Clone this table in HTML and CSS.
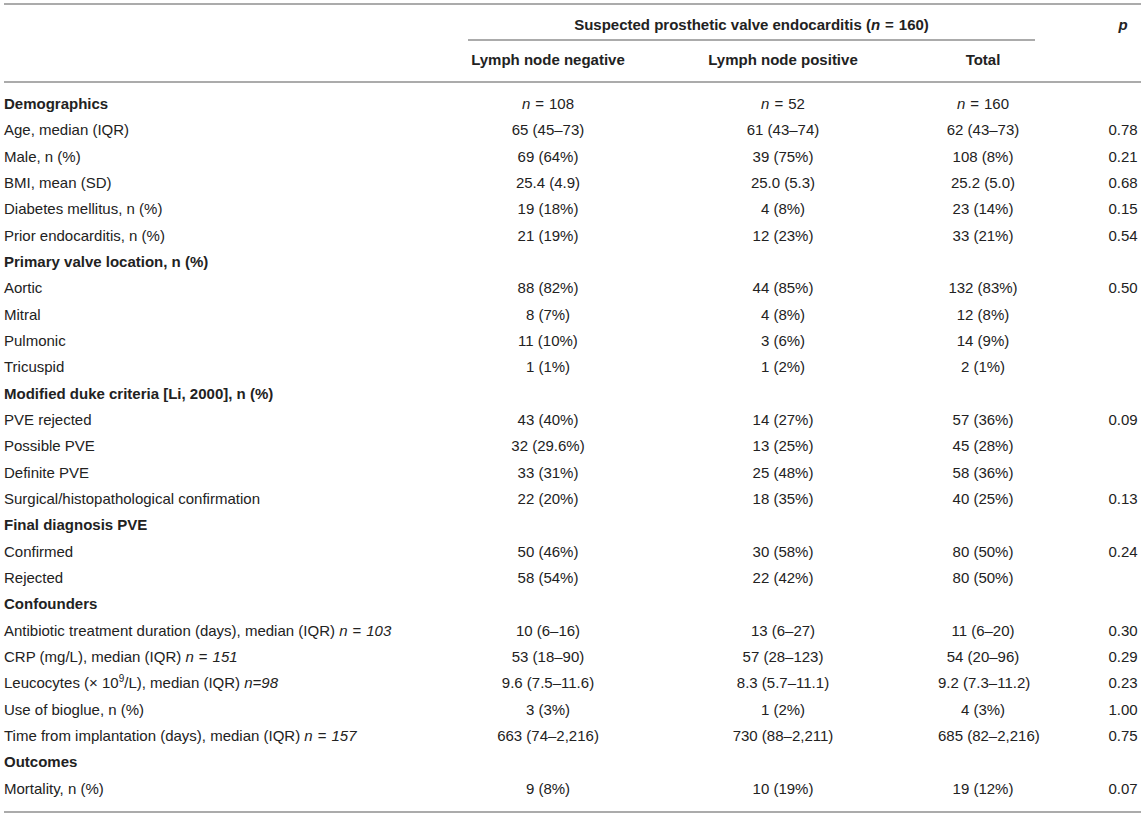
FILE: index.html
```html
<!DOCTYPE html>
<html>
<head>
<meta charset="utf-8">
<link rel="stylesheet" href="styles.css">
</head>
<body>
<div class="tbl">
  <div class="rule"></div>

  <div class="hcell"></div>
  <div class="hcell span">Suspected prosthetic valve endocarditis (<i>n</i><span class="eq">=</span>160)</div>
  <div class="hcell pcol"><i>p</i></div>

  <div class="hcell2"></div>
  <div class="hcell2 c">Lymph node negative</div>
  <div class="hcell2 c">Lymph node positive</div>
  <div class="hcell2 c">Total</div>
  <div class="hcell2"></div>

  <div class="rule"></div>

  <div class="lab sec first">Demographics</div><div class="v first"><i>n</i><span class="eq">=</span>108</div><div class="v first"><i>n</i><span class="eq">=</span>52</div><div class="v first"><i>n</i><span class="eq">=</span>160</div><div class="p first"></div>
  <div class="lab">Age, median (IQR)</div><div class="v">65 (45–73)</div><div class="v">61 (43–74)</div><div class="v">62 (43–73)</div><div class="p">0.78</div>
  <div class="lab">Male, n (%)</div><div class="v">69 (64%)</div><div class="v">39 (75%)</div><div class="v">108 (8%)</div><div class="p">0.21</div>
  <div class="lab">BMI, mean (SD)</div><div class="v">25.4 (4.9)</div><div class="v">25.0 (5.3)</div><div class="v">25.2 (5.0)</div><div class="p">0.68</div>
  <div class="lab">Diabetes mellitus, n (%)</div><div class="v">19 (18%)</div><div class="v">4 (8%)</div><div class="v">23 (14%)</div><div class="p">0.15</div>
  <div class="lab">Prior endocarditis, n (%)</div><div class="v">21 (19%)</div><div class="v">12 (23%)</div><div class="v">33 (21%)</div><div class="p">0.54</div>

  <div class="lab sec">Primary valve location, n (%)</div><div class="v"></div><div class="v"></div><div class="v"></div><div class="p"></div>
  <div class="lab">Aortic</div><div class="v">88 (82%)</div><div class="v">44 (85%)</div><div class="v">132 (83%)</div><div class="p">0.50</div>
  <div class="lab">Mitral</div><div class="v">8 (7%)</div><div class="v">4 (8%)</div><div class="v">12 (8%)</div><div class="p"></div>
  <div class="lab">Pulmonic</div><div class="v">11 (10%)</div><div class="v">3 (6%)</div><div class="v">14 (9%)</div><div class="p"></div>
  <div class="lab">Tricuspid</div><div class="v">1 (1%)</div><div class="v">1 (2%)</div><div class="v">2 (1%)</div><div class="p"></div>

  <div class="lab sec">Modified duke criteria [Li, 2000], n (%)</div><div class="v"></div><div class="v"></div><div class="v"></div><div class="p"></div>
  <div class="lab">PVE rejected</div><div class="v">43 (40%)</div><div class="v">14 (27%)</div><div class="v">57 (36%)</div><div class="p">0.09</div>
  <div class="lab">Possible PVE</div><div class="v">32 (29.6%)</div><div class="v">13 (25%)</div><div class="v">45 (28%)</div><div class="p"></div>
  <div class="lab">Definite PVE</div><div class="v">33 (31%)</div><div class="v">25 (48%)</div><div class="v">58 (36%)</div><div class="p"></div>
  <div class="lab">Surgical/histopathological confirmation</div><div class="v">22 (20%)</div><div class="v">18 (35%)</div><div class="v">40 (25%)</div><div class="p">0.13</div>

  <div class="lab sec">Final diagnosis PVE</div><div class="v"></div><div class="v"></div><div class="v"></div><div class="p"></div>
  <div class="lab">Confirmed</div><div class="v">50 (46%)</div><div class="v">30 (58%)</div><div class="v">80 (50%)</div><div class="p">0.24</div>
  <div class="lab">Rejected</div><div class="v">58 (54%)</div><div class="v">22 (42%)</div><div class="v">80 (50%)</div><div class="p"></div>

  <div class="lab sec">Confounders</div><div class="v"></div><div class="v"></div><div class="v"></div><div class="p"></div>
  <div class="lab">Antibiotic treatment duration (days), median (IQR) <i>n<span class="eq">=</span>103</i></div><div class="v">10 (6–16)</div><div class="v">13 (6–27)</div><div class="v">11 (6–20)</div><div class="p">0.30</div>
  <div class="lab">CRP (mg/L), median (IQR) <i>n<span class="eq">=</span>151</i></div><div class="v">53 (18–90)</div><div class="v">57 (28–123)</div><div class="v">54 (20–96)</div><div class="p">0.29</div>
  <div class="lab">Leucocytes (× 10<sup>9</sup>/L), median (IQR) <i>n=98</i></div><div class="v">9.6 (7.5–11.6)</div><div class="v">8.3 (5.7–11.1)</div><div class="v">9.2 (7.3–11.2)</div><div class="p">0.23</div>
  <div class="lab">Use of bioglue, n (%)</div><div class="v">3 (3%)</div><div class="v">1 (2%)</div><div class="v">4 (3%)</div><div class="p">1.00</div>
  <div class="lab">Time from implantation (days), median (IQR) <i>n<span class="eq">=</span>157</i></div><div class="v">663 (74–2,216)</div><div class="v">730 (88–2,211)</div><div class="v">685 (82–2,216)</div><div class="p">0.75</div>

  <div class="lab sec">Outcomes</div><div class="v"></div><div class="v"></div><div class="v"></div><div class="p"></div>
  <div class="lab last">Mortality, n (%)</div><div class="v last">9 (8%)</div><div class="v last">10 (19%)</div><div class="v last">19 (12%)</div><div class="p last">0.07</div>

  <div class="rule"></div>
</div>
</body>
</html>
```
FILE: styles.css
```css
html, body {
  margin: 0;
  padding: 0;
  background: #ffffff;
}

body {
  font-family: "Liberation Sans", Arial, Helvetica, sans-serif;
  font-size: 15px;
  color: #222222;
}

.tbl {
  display: grid;
  grid-template-columns: 464px 160px 310px 90px 113px;
  margin: 3px 4px 0 4px;
}

.rule {
  grid-column: 1 / -1;
  height: 2px;
  background: #ababab;
}

.hcell {
  padding: 12px 0 6px 0;
  line-height: 16px;
  font-weight: bold;
}

.span {
  grid-column: 2 / 5;
  margin-right: -7px;
  text-align: center;
  border-bottom: 2px solid #ababab;
}

.pcol {
  text-align: center;
  padding-left: 77px;
}

.hcell2 {
  padding: 11px 0 13px 0;
  line-height: 16px;
  font-weight: bold;
}

.c {
  text-align: center;
}

.lab, .v, .p {
  line-height: 26.33px;
  white-space: nowrap;
}

.v {
  text-align: center;
}

.p {
  text-align: center;
  padding-left: 77px;
}

.sec {
  font-weight: bold;
}

.first {
  padding-top: 8px;
}

.last {
  padding-bottom: 9px;
}

.eq {
  font-style: normal;
  margin: 0 5px;
}

sup {
  font-size: 10px;
  line-height: 0;
  vertical-align: 6px;
}
```
